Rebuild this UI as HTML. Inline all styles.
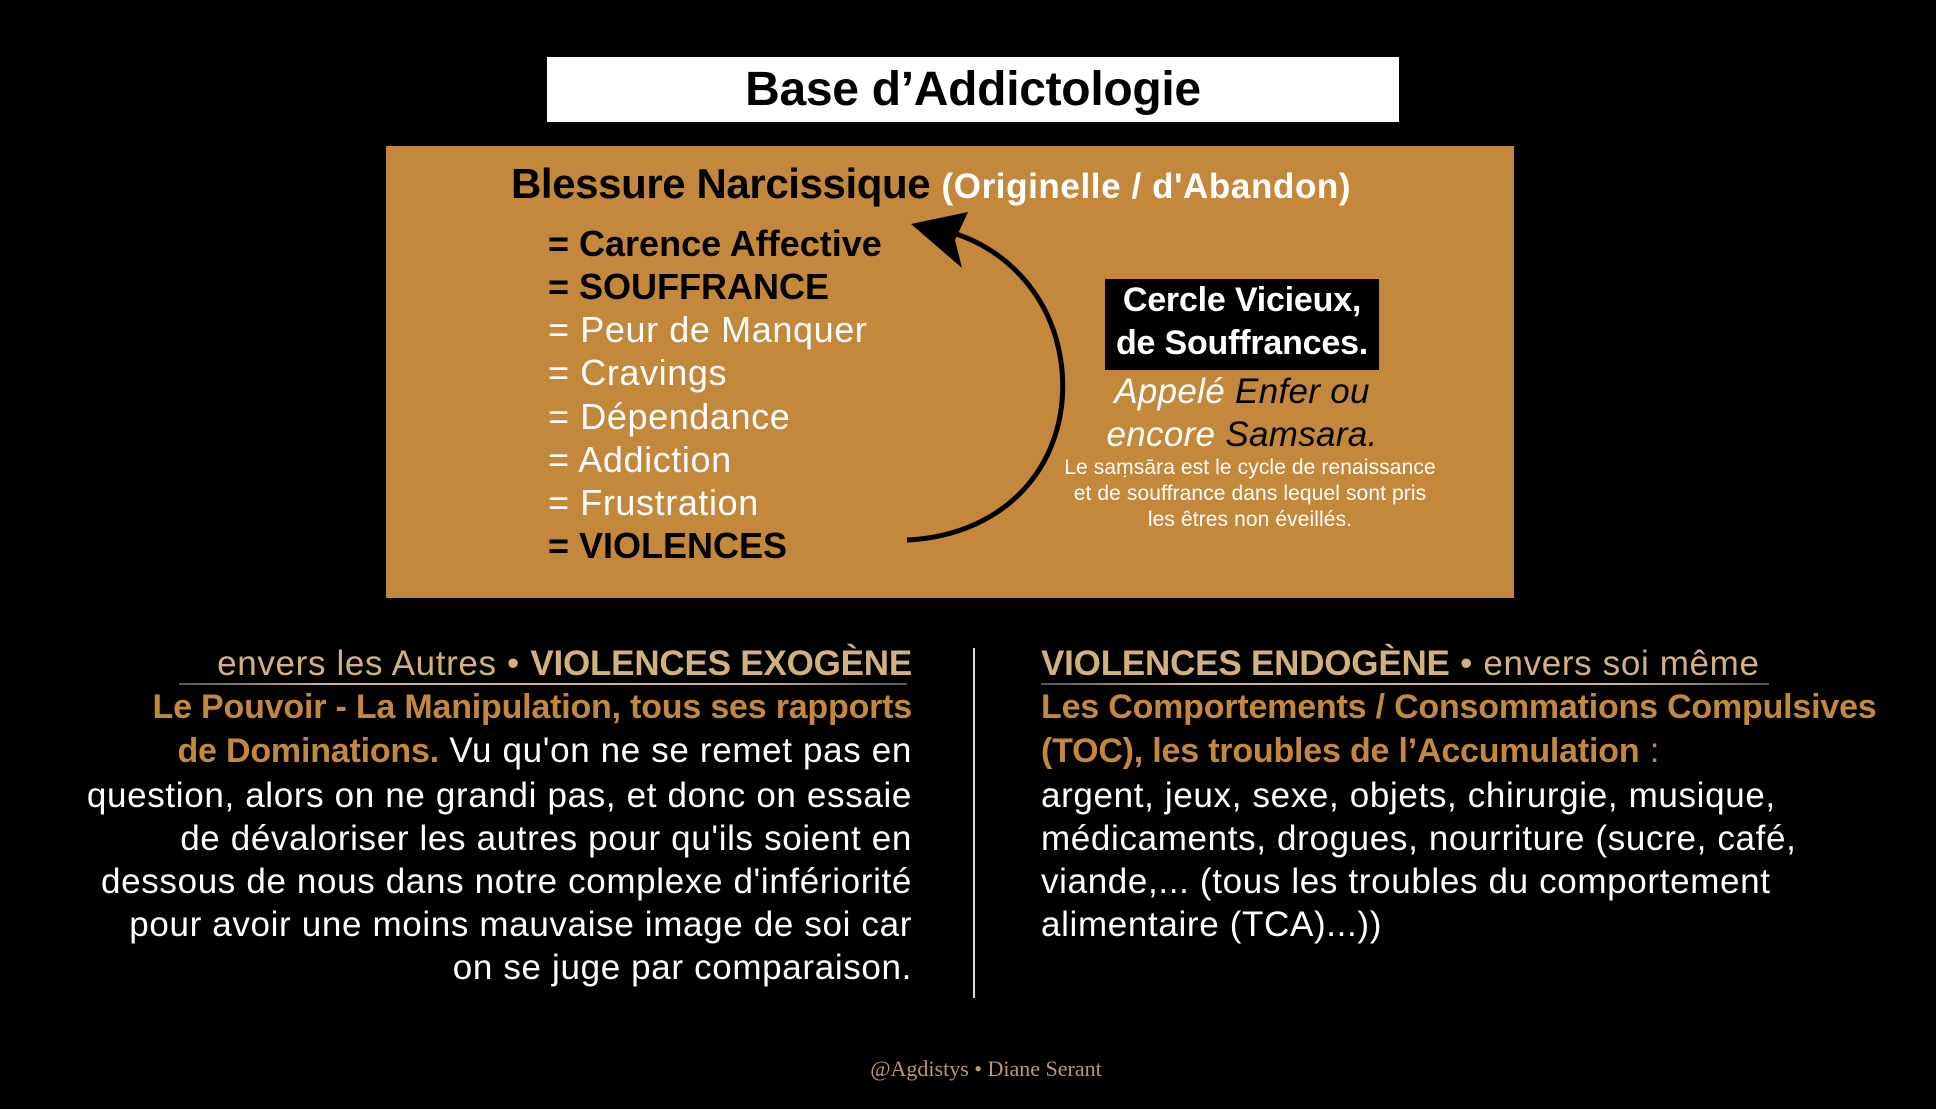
<!DOCTYPE html>
<html><head><meta charset="utf-8"><style>
*{margin:0;padding:0;box-sizing:border-box}
html,body{width:1936px;height:1109px;background:#000;overflow:hidden;font-family:"Liberation Sans",sans-serif}
.abs{position:absolute;white-space:nowrap}
#title{left:547px;top:57px;width:852px;height:65px;background:#fff;text-align:center;font-weight:bold;font-size:48px;line-height:65px;color:#000;letter-spacing:-0.3px}
#box{left:386px;top:146px;width:1128px;height:452px;background:#c4883d}
.li{left:548px;font-size:36px;color:#fff;letter-spacing:0.6px}
.b{font-weight:bold;color:#000;letter-spacing:0}
.col{font-size:35px;line-height:43.2px;color:#fff;letter-spacing:0.65px}
.col b,.col .or{letter-spacing:-0.2px}
.col .or{font-size:34px}
.tan{color:#d3b17c}
.or{color:#c4883d;font-weight:bold}
</style></head><body>
<div id="title" class="abs">Base d’Addictologie</div>
<div id="box" class="abs"></div>
<div class="abs" style="left:511px;top:160px;font-size:42px;font-weight:bold;color:#000;letter-spacing:-0.4px">Blessure Narcissique <span style="color:#fff;font-size:35px;letter-spacing:0.6px">(Originelle / d'Abandon)</span></div>
<div class="abs li b" style="top:223px">= Carence Affective</div>
<div class="abs li b" style="top:266px">= SOUFFRANCE</div>
<div class="abs li" style="top:309px">= Peur de Manquer</div>
<div class="abs li" style="top:352px">= Cravings</div>
<div class="abs li" style="top:396px">= Dépendance</div>
<div class="abs li" style="top:439px">= Addiction</div>
<div class="abs li" style="top:482px">= Frustration</div>
<div class="abs li b" style="top:525px">= VIOLENCES</div>
<svg class="abs" style="left:0;top:0" width="1936" height="1109">
<path d="M907 540 C1010 535 1070 460 1062 370 C1055 300 1010 250 950 232" fill="none" stroke="#000" stroke-width="5"/>
<path d="M911 224 L968 212 L955 240 L962 268 Z" fill="#000"/>
</svg>
<div class="abs" style="left:1105px;top:279px;width:274px;height:91px;background:#000;color:#fff;font-weight:bold;font-size:34px;line-height:43px;text-align:center;letter-spacing:-0.2px">Cercle Vicieux,<br>de Souffrances.</div>
<div class="abs" style="left:1040px;top:370px;width:404px;text-align:center;font-style:italic;font-size:35px;line-height:43px;color:#fff;letter-spacing:0.3px">Appelé <span style="color:#000">Enfer ou</span><br>encore <span style="color:#000">Samsara.</span></div>
<div class="abs" style="left:1030px;top:455px;width:440px;text-align:center;font-size:21px;line-height:26px;color:#fff;letter-spacing:0.1px">Le saṃsāra est le cycle de renaissance<br>et de souffrance dans lequel sont pris<br>les êtres non éveillés.</div>
<div class="abs col" style="right:1024px;top:642px;text-align:right"><span class="tan">envers les Autres • <b>VIOLENCES EXOGÈNE</b></span><br><span class="or">Le Pouvoir - La Manipulation, tous ses rapports</span><br><span class="or">de Dominations.</span> Vu qu'on ne se remet pas en<br>question, alors on ne grandi pas, et donc on essaie<br>de dévaloriser les autres pour qu'ils soient en<br>dessous de nous dans notre complexe d'infériorité<br>pour avoir une moins mauvaise image de soi car<br>on se juge par comparaison.</div>
<div class="abs" style="left:179px;top:683px;width:728px;height:2px;background:linear-gradient(90deg,#555,#d3b17c 20%,#d3b17c 80%,#555)"></div>
<div class="abs" style="left:1041px;top:683px;width:728px;height:2px;background:linear-gradient(90deg,#555,#d3b17c 20%,#d3b17c 80%,#555)"></div>
<div class="abs" style="left:973px;top:648px;width:2px;height:350px;background:#ddd"></div>
<div class="abs col" style="left:1041px;top:642px"><span class="tan"><b>VIOLENCES ENDOGÈNE</b> • envers soi même</span><br><span class="or">Les Comportements / Consommations Compulsives</span><br><span class="or">(TOC), les troubles de l’Accumulation</span> <span style="color:#c4883d">:</span><br>argent, jeux, sexe, objets, chirurgie, musique,<br>médicaments, drogues, nourriture (sucre, café,<br>viande,... (tous les troubles du comportement<br>alimentaire (TCA)...))</div>
<div class="abs" style="left:786px;width:400px;top:1056px;text-align:center;font-family:'Liberation Serif',serif;font-size:22px;color:#b89a6a">@Agdistys • Diane Serant</div>
</body></html>
